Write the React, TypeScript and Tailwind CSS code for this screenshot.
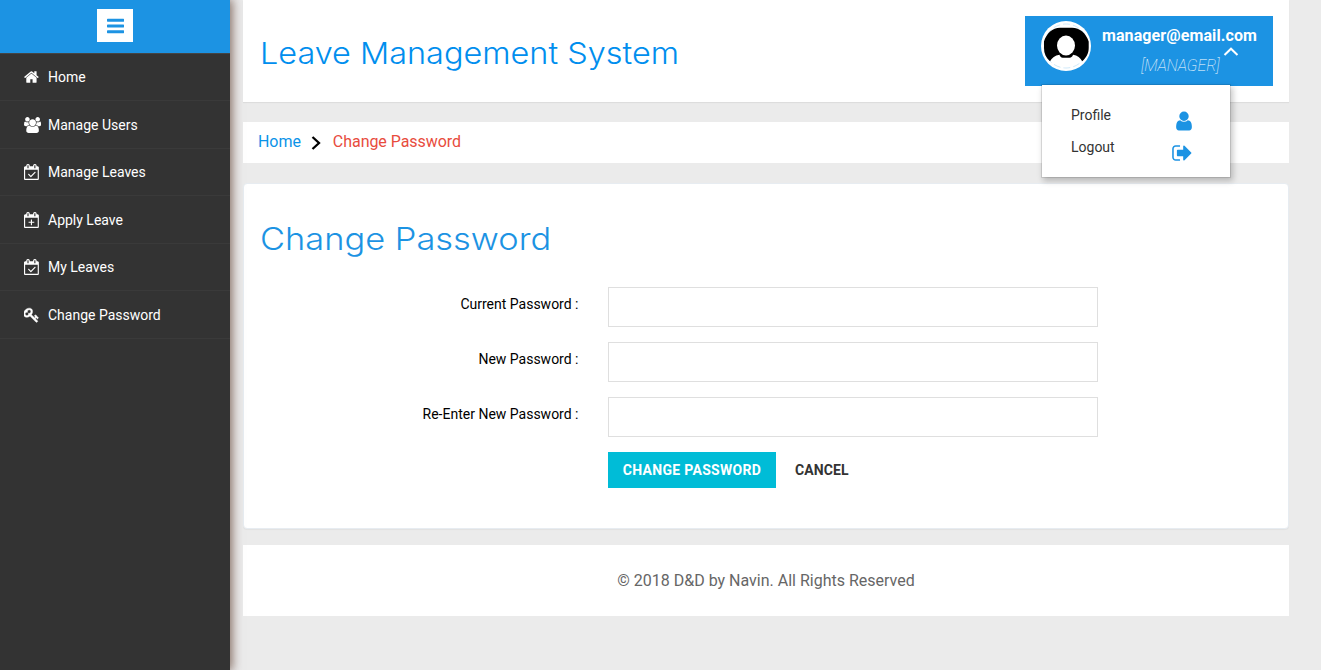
import React from "react";

const PATHS = {
  bars: "M1664 1344v128q0 26-19 45t-45 19h-1408q-26 0-45-19t-19-45v-128q0-26 19-45t45-19h1408q26 0 45 19t19 45zm0-512v128q0 26-19 45t-45 19h-1408q-26 0-45-19t-19-45v-128q0-26 19-45t45-19h1408q26 0 45 19t19 45zm0-512v128q0 26-19 45t-45 19h-1408q-26 0-45-19t-19-45v-128q0-26 19-45t45-19h1408q26 0 45 19t19 45z",
  home: "M1472 992v480q0 26-19 45t-45 19h-384v-384h-256v384h-384q-26 0-45-19t-19-45v-480q0-1 .5-3t.5-3l575-474 575 474q1 2 1 6zm223-69l-62 74q-8 9-21 11h-3q-13 0-21-7l-692-577-692 577q-12 8-24 7-13-2-21-11l-62-74q-8-10-7-23.5t11-21.5l719-599q32-26 76-26t76 26l244 204v-195q0-14 9-23t23-9h192q14 0 23 9t9 23v408l219 182q10 8 11 21.5t-7 23.5z",
  users: "M593 896q-162 5-265 128h-134q-82 0-138-40.5t-56-118.5q0-353 124-353 6 0 43.5 21t97.5 42.5 119 21.5q67 0 133-23-5 37-5 66 0 139 81 256zm1071 637q0 120-73 189.5t-194 69.5h-874q-121 0-194-69.5t-73-189.5q0-53 3.5-103.5t14-109 26.5-108.5 43-97.5 62-81 85.5-53.5 111.5-20q10 0 43 21.5t73 48 107 48 135 21.5 135-21.5 107-48 73-48 43-21.5q61 0 111.5 20t85.5 53.5 62 81 43 97.5 26.5 108.5 14 109 3.5 103.5zm-1024-1277q0 106-75 181t-181 75-181-75-75-181 75-181 181-75 181 75 75 181zm704 384q0 159-112.5 271.5t-271.5 112.5-271.5-112.5-112.5-271.5 112.5-271.5 271.5-112.5 271.5 112.5 112.5 271.5zm576 225q0 78-56 118.5t-138 40.5h-134q-103-123-265-128 81-117 81-256 0-29-5-66 66 23 133 23 59 0 119-21.5t97.5-42.5 43.5-21q124 0 124 353zm-128-609q0 106-75 181t-181 75-181-75-75-181 75-181 181-75 181 75 75 181z",
  key: "M832 512q0-80-56-136t-136-56-136 56-56 136q0 42 19 83-41-19-83-19-80 0-136 56t-56 136 56 136 136 56 136-56 56-136q0-42-19-83 41 19 83 19 80 0 136-56t56-136zm851 704q0 17-49 66t-66 49q-9 0-28.5-16t-36.5-33-38.5-40-24.5-26l-96 96 220 220q28 28 28 68 0 42-39 81t-81 39q-40 0-68-28l-671-671q-176 131-365 131-163 0-265.5-102.5t-102.5-265.5q0-160 95-313t248-248 313-95q163 0 265.5 102.5t102.5 265.5q0 189-131 365l355 355 96-96q-3-3-26-24.5t-40-38.5-33-36.5-16-28.5q0-17 49-66t66-49q13 0 23 10 6 6 46 44.5t82 79.5 86.5 86 73 78 28.5 41z",
  user: "M1536 1399q0 109-62.5 187t-150.5 78h-854q-88 0-150.5-78t-62.5-187q0-85 8.5-160.5t31.5-152 58.5-131 94-89 134.5-34.5q131 128 313 128t313-128q76 0 134.5 34.5t94 89 58.5 131 31.5 152 8.5 160.5zm-256-887q0 159-112.5 271.5t-271.5 112.5-271.5-112.5-112.5-271.5 112.5-271.5 271.5-112.5 271.5 112.5 112.5 271.5z",
  signOut: "M704 1440q0 4 1 20t.5 26.5-3 23.5-10 19.5-20.5 6.5h-320q-119 0-203.5-84.5t-84.5-203.5v-704q0-119 84.5-203.5t203.5-84.5h320q13 0 22.5 9.5t9.5 22.5q0 4 1 20t.5 26.5-3 23.5-10 19.5-20.5 6.5h-320q-66 0-113 47t-47 113v704q0 66 47 113t113 47h312l11.5 1 11.5 3 8 5.5 7 9 2 13.5zm928-544q0 26-19 45l-544 544q-19 19-45 19t-45-19-19-45v-288h-448q-26 0-45-19t-19-45v-384q0-26 19-45t45-19h448v-288q0-26 19-45t45-19 45 19l544 544q19 19 19 45z",
  calendar: "M128 1664h1408v-1024h-1408v1024zm384-1216v-288q0-14-9-23t-23-9h-64q-14 0-23 9t-9 23v288q0 14 9 23t23 9h64q14 0 23-9t9-23zm768 0v-288q0-14-9-23t-23-9h-64q-14 0-23 9t-9 23v288q0 14 9 23t23 9h64q14 0 23-9t9-23zm384-64v1280q0 52-38 90t-90 38h-1408q-52 0-90-38t-38-90v-1280q0-52 38-90t90-38h128v-96q0-66 47-113t113-47h64q66 0 113 47t47 113v96h384v-96q0-66 47-113t113-47h64q66 0 113 47t47 113v96h128q52 0 90 38t38 90z",
  check: "M1303 964l-512 512q-10 9-23 9t-23-9l-288-288q-9-10-9-23t9-22l46-46q9-9 22-9t23 9l220 220 444-444q10-9 23-9t22 9l46 46q9 9 9 22t-9 23z",
  plus: "M1152 1120v64q0 14-9 23t-23 9h-224v224q0 14-9 23t-23 9h-64q-14 0-23-9t-9-23v-224h-224q-14 0-23-9t-9-23v-64q0-14 9-23t23-9h224v-224q0-14 9-23t23-9h64q14 0 23 9t9 23v224h224q14 0 23 9t9 23z",
};

function Glyph({ paths, box, className }: { paths: string[]; box: string; className: string }) {
  return (
    <svg viewBox={box} className={className} fill="currentColor" aria-hidden="true">
      {paths.map((d) => (
        <path key={d} d={d} />
      ))}
    </svg>
  );
}

const NAV = [
  { label: "Home", box: "64 0 1664 1792", paths: [PATHS.home], w: "w-[14.86px]" },
  { label: "Manage Users", box: "0 0 1920 1792", paths: [PATHS.users], w: "w-[17.14px]" },
  { label: "Manage Leaves", box: "0 0 1664 1792", paths: [PATHS.calendar, PATHS.check], w: "w-[14.86px]" },
  { label: "Apply Leave", box: "0 0 1664 1792", paths: [PATHS.calendar, PATHS.plus], w: "w-[14.86px]" },
  { label: "My Leaves", box: "0 0 1664 1792", paths: [PATHS.calendar, PATHS.check], w: "w-[14.86px]" },
  { label: "Change Password", box: "64 0 1664 1792", paths: [PATHS.key], w: "w-[14.86px] stroke-white stroke-[50]" },
];

function Sidebar() {
  return (
    <aside className="relative z-10 h-full w-[230px] shrink-0 bg-[#333333] shadow-[1px_0_10px_1px_rgba(60,20,0,0.6)]">
      <div className="flex h-[53px] justify-center bg-[#1c93e3] pt-[9px]">
        <button className="flex h-[33px] w-9 items-center justify-center bg-white text-[#1c93e3]">
          <Glyph box="128 0 1536 1792" paths={[PATHS.bars]} className="ml-px h-5 w-[17.14px]" />
        </button>
      </div>
      <nav className="border-t border-[#454545]">
        {NAV.map((n) => (
          <a key={n.label} className="flex h-[47.48px] items-center border-b border-[#3a3a3a] pl-6 text-sm text-white">
            <span className="flex w-6">
              <Glyph box={n.box} paths={n.paths} className={"h-4 " + n.w} />
            </span>
            {n.label}
          </a>
        ))}
      </nav>
    </aside>
  );
}

function Avatar() {
  return (
    <svg viewBox="0 0 50 50" className="h-[50px] w-[50px]" aria-hidden="true">
      <circle cx="25" cy="25" r="25" fill="#fff" />
      <circle cx="25" cy="25" r="22" fill="none" stroke="#c4e3f8" strokeWidth="0.8" strokeDasharray="7 3" />
      <path
        d="M9 40.300C5 37 3 32.500 3 27V20.500C5.500 12.500 11.500 6.800 19 6.800H31C39 6.800 45 12.500 47.700 20.500V27C47.700 32.500 45 37 41.200 40.300C39.500 37 36.500 34.500 32 33.800C31.500 35.500 30.500 36.700 28.500 36.700H21.700C20 36.700 19 35.500 18.500 33.800C14 34.300 10.800 37 9 40.300Z"
        fill="#000"
      />
      <ellipse cx="25" cy="24.500" rx="9" ry="10" fill="#fff" />
    </svg>
  );
}

function UserPanel() {
  return (
    <div className="relative mt-4 mr-4 flex h-[70px] w-[248px] bg-[#1c93e3] pl-4 text-white">
      <div className="pt-[5px]">
        <Avatar />
      </div>
      <div className="ml-[11px] flex flex-col pt-2">
        <span className="text-base leading-6 font-bold tracking-[0.1px]">manager@email.com</span>
        <div className="flex">
          <span className="ml-[39px] pt-1.5 text-base leading-6 font-thin tracking-[-0.1px] italic">[MANAGER]</span>
          <svg viewBox="0 0 16 9" className="-mt-px ml-1 h-[9px] w-4" fill="none" stroke="#fff" strokeWidth="2" aria-hidden="true">
            <path d="M1.500 8L8 1.700L14.500 8" />
          </svg>
        </div>
      </div>
      <div className="absolute top-[68px] left-4 z-20 flex h-[94px] w-[190px] flex-col border border-black/10 bg-white bg-clip-padding pt-[14px] pr-[38px] pl-[29px] text-sm text-[#333333] shadow-[2px_3px_6px_rgba(0,0,0,0.22)]">
        <a className="flex h-8 justify-between leading-8">
          Profile
          <Glyph box="256 0 1280 1792" paths={[PATHS.user]} className="mt-[11px] h-[22px] w-4 text-[#1c93e3]" />
        </a>
        <a className="flex h-8 justify-between leading-8">
          Logout
          <Glyph box="64 0 1600 1792" paths={[PATHS.signOut]} className="mt-[11px] h-[22px] w-5 text-[#1c93e3]" />
        </a>
      </div>
    </div>
  );
}

const FIELDS = ["Current Password :", "New Password :", "Re-Enter New Password :"];

export default function App() {
  return (
    <div className="flex h-[670px] w-[1321px] overflow-hidden bg-[#ebebeb] font-['Roboto',sans-serif]">
      <Sidebar />
      <main className="ml-[13px] flex w-[1046px] flex-col">
        <header className="relative z-10 flex h-[102px] shrink-0 justify-between bg-white shadow-[0_1px_1px_rgba(0,0,0,0.06)]">
          <h1 className="ml-[16.500px] origin-left scale-x-[1.081] pt-[31px] font-['Inter',sans-serif] text-[30px] leading-[44px] font-light whitespace-nowrap text-[#008eee]">
            Leave Management System
          </h1>
          <UserPanel />
        </header>
        <div className="mt-5 flex h-[41px] shrink-0 items-center bg-white pb-[2px] pl-[15px] text-base tracking-[-0.05px]">
          <span className="text-[#0b93e8]">Home</span>
          <svg viewBox="0 0 10 14" className="mt-[3px] mr-3 ml-2.5 h-3.5 w-2.5" fill="none" stroke="#000" strokeWidth="2.300" aria-hidden="true">
            <path d="M1.500 1L8 7L1.500 13" />
          </svg>
          <span className="text-[#e84c3d]">Change Password</span>
        </div>
        <section className="mt-5 h-[346px] shrink-0 rounded border border-[#e7ecf1] bg-white shadow-[0_1px_1px_rgba(0,0,0,0.04)]">
          <h2 className="ml-[15.500px] pt-[33px] font-['Inter',sans-serif] text-[31px] leading-[44px] font-light whitespace-nowrap text-[#1c93e3]">
            <span className="inline-block origin-left scale-x-[1.11]">Change Password</span>
          </h2>
          <form className="mt-[26px] flex flex-col gap-[15px]">
            {FIELDS.map((f) => (
              <label key={f} className="flex h-10 gap-[29.500px] text-sm text-black">
                <span className="w-[334.500px] pt-[7px] text-right">{f}</span>
                <input type="password" className="h-10 w-[490px] border border-[#dfdfdf] bg-white outline-none" />
              </label>
            ))}
            <div className="flex h-9 items-center gap-[19px] pl-[364px] text-sm font-bold">
              <button type="button" className="h-9 w-[168px] bg-[#00bcd7] tracking-[0.3px] text-white">CHANGE PASSWORD</button>
              <button type="button" className="tracking-[0.1px] text-[#333333]">CANCEL</button>
            </div>
          </form>
        </section>
        <footer className="mt-4 flex h-[71px] shrink-0 items-center justify-center bg-white text-base text-[#666666]">
          © 2018 D&amp;D by Navin. All Rights Reserved
        </footer>
      </main>
    </div>
  );
}
